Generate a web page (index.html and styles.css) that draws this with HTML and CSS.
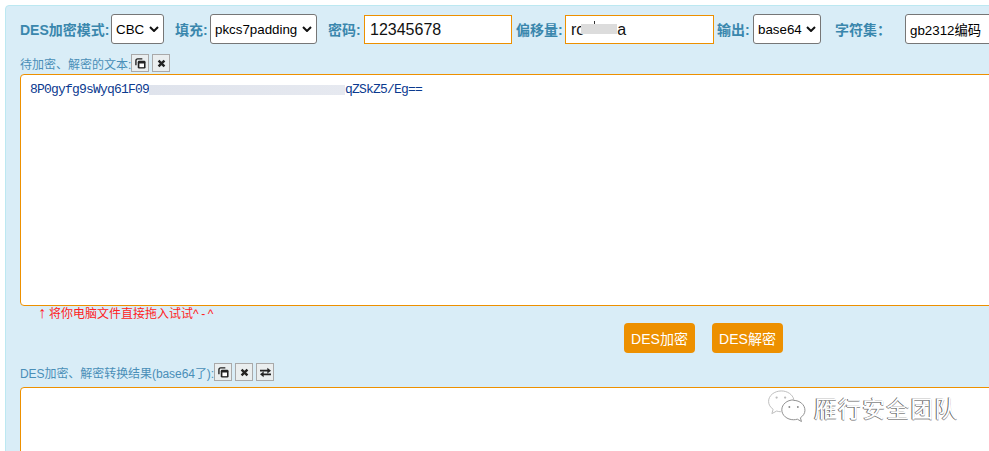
FILE: index.html
```html
<!DOCTYPE html>
<html lang="zh">
<head>
<meta charset="utf-8">
<title>DES</title>
<link rel="stylesheet" href="styles.css">
</head>
<body>
<main class="panel">
  <div class="opts">
    <label class="lab lab-first">DES加密模式:</label>
    <div class="sel sel-cbc">CBC<svg class="chev" viewBox="0 0 10 6"><path d="M1 1l4 4 4-4" /></svg></div>
    <label class="lab lab-fill">填充:</label>
    <div class="sel sel-pad">pkcs7padding<svg class="chev" viewBox="0 0 10 6"><path d="M1 1l4 4 4-4" /></svg></div>
    <label class="lab lab-key">密码:</label>
    <div class="inp inp-key">12345678</div>
    <label class="lab lab-iv">偏移量:</label>
    <div class="inp inp-iv">rc<span class="smudge"></span>a</div>
    <label class="lab lab-out">输出:</label>
    <div class="sel sel-out">base64<svg class="chev" viewBox="0 0 10 6"><path d="M1 1l4 4 4-4" /></svg></div>
    <label class="lab lab-cs">字符集：</label>
    <div class="sel sel-cs">gb2312编码</div>
  </div>

  <div class="cap cap-top">
    <span>待加密、解密的文本:</span>
    <button class="ico"><svg viewBox="0 0 12 12"><use href="#i-copy"/></svg></button>
    <button class="ico"><svg viewBox="0 0 12 12"><use href="#i-x"/></svg></button>
  </div>
  <div class="area area-in"><span class="cipher">8P0gyfg9sWyq61F09<span class="blur"></span>qZSkZ5/Eg==</span></div>

  <p class="hint"><span class="arrow">↑</span>将你电脑文件直接拖入试试<span class="face">^-^</span></p>

  <div class="actions">
    <button class="go">DES加密</button>
    <button class="go">DES解密</button>
  </div>

  <div class="cap cap-res">
    <span class="res-text">DES加密、解密转换结果(base64了):</span>
    <button class="ico"><svg viewBox="0 0 12 12"><use href="#i-copy"/></svg></button>
    <button class="ico"><svg viewBox="0 0 12 12"><use href="#i-x"/></svg></button>
    <button class="ico"><svg viewBox="0 0 12 12"><use href="#i-swap"/></svg></button>
  </div>
  <div class="area area-out"></div>
</main>

<div class="mark">
  <svg class="wechat" viewBox="0 0 42 36">
    <path class="faint" d="M15 1C7.500 1 1.500 6 1.500 12c0 3.500 1.800 6.300 4.800 8.400L5 25l5-2.700c1.500.4 3 .7 4.500.7" />
    <path class="faint" d="M15 1c6.500 0 12 3.800 13.200 9" />
    <path d="M28 10.500c-7 0-12.500 4.700-12.500 10.500S21 31.500 28 31.500c1.400 0 2.700-.2 4-.6l4.300 2.500-1.100-4c3-2 4.800-4.800 4.800-7.900 0-5.800-5.300-10.500-12-10.500z" />
    <circle class="faint-dot" cx="10" cy="8" r="1.200"/><circle class="faint-dot" cx="19" cy="8" r="1.200"/>
    <circle cx="23.500" cy="18" r="1"/><circle cx="32.500" cy="18" r="1"/>
  </svg>
  <span class="mark-text">雁行安全团队</span>
</div>

<svg class="defs" aria-hidden="true">
  <symbol id="i-copy" viewBox="0 0 12 12"><path d="M1 8V3A2 2 0 0 1 3 1h5" fill="none" stroke="#222" stroke-width="1.500"/><rect x="3" y="3" width="8.500" height="8.500" rx="1.500" fill="#222"/><rect x="4.800" y="6" width="5" height="4" fill="#fff"/></symbol>
  <symbol id="i-x" viewBox="0 0 12 12"><path d="M2.800 2.800l6.400 6.400M9.200 2.800L2.800 9.200" stroke="#222" stroke-width="2.600" fill="none"/></symbol>
  <symbol id="i-swap" viewBox="0 0 12 12"><path d="M0 3h8V.8L12 4 8 7V5H0z M12 7H4V5L0 8l4 3.200V9h8z" fill="#222"/></symbol>
</svg>
</body>
</html>
```
FILE: styles.css
```css
html, body {
  margin: 0;
  height: 451px;
  overflow: hidden;
  background: #fff;
}
body {
  position: relative;
  padding: 5px 0 0 5px;
  box-sizing: border-box;
  font-family: "Liberation Sans", "Noto Sans CJK SC", sans-serif;
}
.panel {
  width: 1100px;
  height: 520px;
  box-sizing: border-box;
  background: #d9edf7;
  border: 1px solid #bce8f1;
  border-radius: 4px;
  padding: 8px 0 0 14px;
}
.opts {
  display: flex;
  align-items: center;
  height: 30px;
  white-space: nowrap;
}
.lab {
  color: #3a87ad;
  font-size: 14px;
  font-weight: 700;
}
.lab-first { width: 91px; }
.lab-fill { width: 35px; margin-left: 11px; }
.lab-key { width: 36px; margin-left: 11px; }
.lab-iv { width: 49px; margin-left: 4px; }
.lab-out { width: 36px; margin-left: 3px; }
.lab-cs { width: 70px; margin-left: 14px; }
.sel {
  display: flex;
  align-items: center;
  justify-content: space-between;
  box-sizing: border-box;
  height: 30px;
  background: #fff;
  border: 1px solid #767676;
  border-radius: 3px;
  padding: 0 4px;
  color: #000;
  font-size: 13.330px;
}
.sel-cbc { width: 53px; }
.sel-pad { width: 107px; }
.sel-out { width: 68px; }
.sel-cs { width: 120px; justify-content: flex-start; }
.chev {
  width: 10px;
  height: 6px;
  fill: none;
  stroke: #111;
  stroke-width: 2;
  flex: none;
}
.inp {
  box-sizing: border-box;
  height: 29px;
  background: #fff;
  border: 1px solid #ed9000;
  color: #111;
  font-size: 16px;
  line-height: 27px;
  padding-left: 5px;
  display: flex;
  align-items: center;
}
.inp-key { width: 148px; }
.inp-iv { width: 149px; }
.smudge {
  position: relative;
  display: block;
  width: 36px;
  height: 10px;
  margin-left: -3px;
  background: #dcdcdc;
}
.smudge::before {
  content: "";
  position: absolute;
  left: 13px;
  top: -3px;
  width: 1px;
  height: 3px;
  background: #333;
}
.cap {
  display: flex;
  align-items: center;
  color: #4a8fb8;
  font-size: 12px;
  height: 18px;
}
.cap-top { margin-top: 10px; }
.res-text { letter-spacing: -.06px; }
.ico {
  width: 18px;
  height: 18px;
  padding: 0;
  margin: 0;
  display: flex;
  align-items: center;
  justify-content: center;
  background: #eaeeef;
  border: 1px solid #a9a9a9;
}
.ico + .ico { margin-left: 3px; }
.ico svg { width: 11px; height: 11px; }
.area {
  box-sizing: border-box;
  width: 1000px;
  background: #fff;
  border: 1px solid #ed9000;
  border-radius: 4px;
  margin-top: 2px;
}
.area-in { height: 232px; padding: 7px 9px; }
.cipher {
  display: block;
  color: #0b3a8f;
  font-family: "Liberation Mono", monospace;
  font-size: 13px;
  letter-spacing: -.8px;
  line-height: 15px;
  white-space: nowrap;
}
.blur {
  display: inline-block;
  vertical-align: middle;
  width: 196px;
  height: 10px;
  background: linear-gradient(90deg, #dfe3ec, #e6e9f0);
}
.hint {
  margin: 0 0 0 18px;
  height: 16px;
  color: #f22;
  font-size: 12px;
  line-height: 16px;
}
.arrow {
  display: inline-block;
  width: 11px;
  font-weight: 700;
  font-size: 16px;
  line-height: 14px;
}
.face { letter-spacing: 2.500px; }
.actions {
  display: flex;
  gap: 17px;
  margin: 1px 0 0 604px;
}
.go {
  width: 71px;
  height: 30px;
  padding: 0;
  border: 0;
  border-radius: 4px;
  background: #ed9000;
  color: #fff;
  font-family: inherit;
  font-size: 14px;
}
.cap-res { margin-top: 10px; }
.area-out { height: 120px; margin-top: 6px; }
.mark {
  position: absolute;
  left: 767px;
  top: 390px;
  display: flex;
  align-items: center;
  gap: 7px;
}
.wechat {
  width: 40px;
  height: 34px;
  fill: none;
  stroke: #8a8a8a;
  stroke-width: 1;
}
.wechat .faint { stroke: #bbb; }
.wechat circle { fill: #8a8a8a; stroke: none; }
.wechat .faint-dot { fill: #bbb; }
.mark-text {
  color: #fff;
  font-size: 23px;
  letter-spacing: 1.100px;
  text-shadow: -1px 0 0 #666, 0 1px 0 #999;
}
.defs { position: absolute; width: 0; height: 0; }
```
